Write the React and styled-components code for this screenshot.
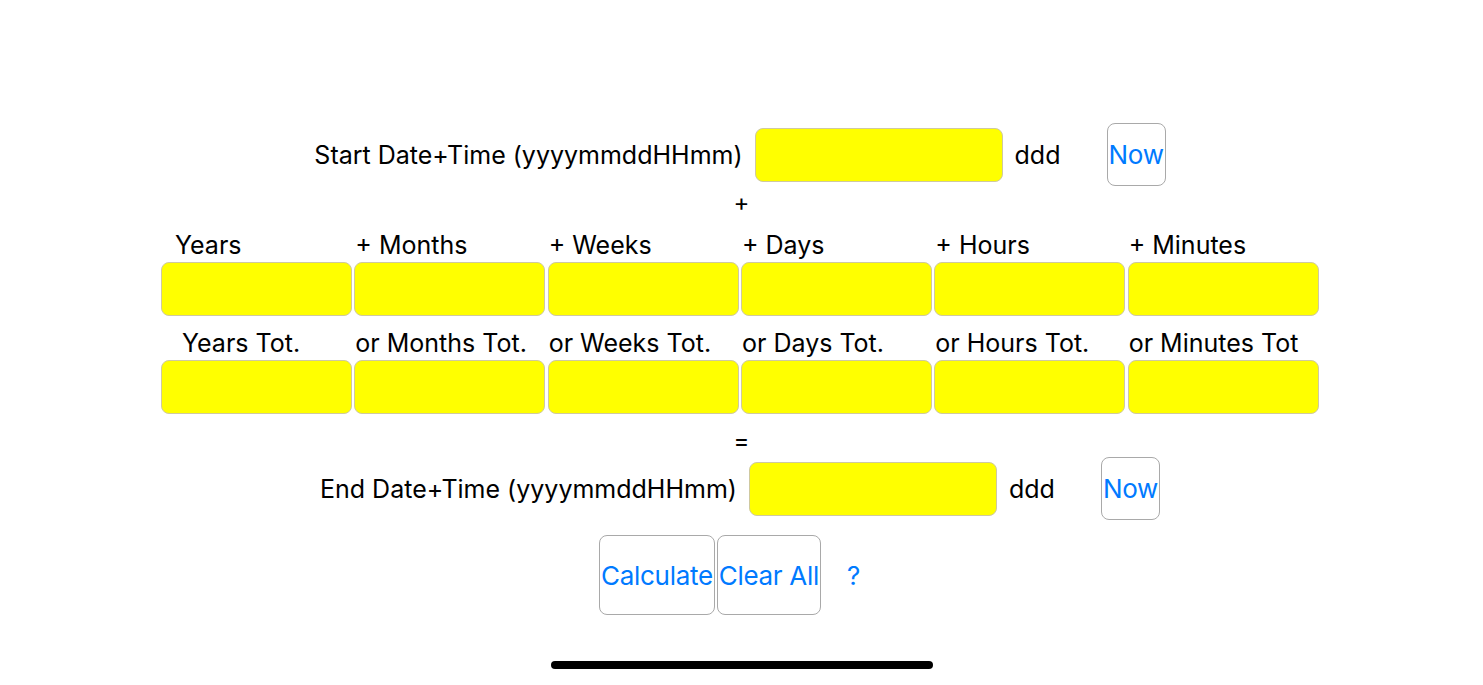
import React from "react";
import styled, { createGlobalStyle } from "styled-components";

const GlobalStyle = createGlobalStyle`
  html, body {
    margin: 0;
    padding: 0;
    background: #ffffff;
  }
  body {
    font-family: Inter, "Liberation Sans", Arial, sans-serif;
    color: #000;
  }
`;

const Page = styled.div`
  height: 685px;
  display: flex;
  flex-direction: column;
  align-items: center;
  padding-top: 123px;
  box-sizing: border-box;
`;

const DateRow = styled.div`
  height: 63px;
  display: flex;
  align-items: center;
  gap: 12px;
  margin-top: ${(p) => p.top || 0}px;
  margin-left: ${(p) => p.shift || 0}px;
`;

const RowLabel = styled.span`
  font-size: 25px;
  white-space: nowrap;
`;

const Field = styled.div`
  width: ${(p) => p.width || 248}px;
  height: 54px;
  background: #ffff00;
  border: 1px solid #cfc9a0;
  border-radius: 8px;
  box-sizing: border-box;
`;

const Ddd = styled.span`
  width: 80px;
  font-size: 25px;
`;

const Button = styled.button`
  height: ${(p) => p.h || 63}px;
  min-width: ${(p) => p.w || 0}px;
  padding: 0 1px;
  background: #fff;
  border: 1px solid ${(p) => (p.bare ? "transparent" : "#a9a9a9")};
  border-radius: 8px;
  color: #007aff;
  font-family: Inter, "Liberation Sans", Arial, sans-serif;
  font-size: 26px;
  letter-spacing: -0.3px;
  cursor: pointer;
`;

const Sign = styled.div`
  height: 30px;
  line-height: 30px;
  font-size: 24px;
  margin-top: ${(p) => p.top || 0}px;
`;

const Grid = styled.div`
  margin-top: 12px;
  margin-left: -3px;
  width: 1158px;
  display: grid;
  grid-template-columns: repeat(6, 1fr);
  column-gap: 2px;
  row-gap: 12px;
`;

const Cell = styled.div`
  display: flex;
  flex-direction: column;
  gap: 2px;
`;

const CellLabel = styled.div`
  height: 30px;
  line-height: 30px;
  font-size: 25px;
  white-space: nowrap;
  padding-left: ${(p) => p.indent || 1}px;
`;

const ActionRow = styled.div`
  margin-top: 15px;
  display: flex;
  gap: 2px;
`;

const HomeBar = styled.div`
  margin-top: auto;
  margin-bottom: 16px;
  width: 382px;
  height: 8px;
  border-radius: 4px;
  background: #000;
`;

const plusLabels = [
  ["Years", 14],
  ["+ Months", 1],
  ["+ Weeks", 1],
  ["+ Days", 0],
  ["+ Hours", 1],
  ["+ Minutes", 0],
];

const totLabels = [
  ["Years Tot.", 21],
  ["or Months Tot.", 1],
  ["or Weeks Tot.", 1],
  ["or Days Tot.", 0],
  ["or Hours Tot.", 1],
  ["or Minutes Tot", 0],
];

const DateLine = ({ label, top }) => (
  <DateRow shift={-3} top={top}>
    <RowLabel>{label}</RowLabel>
    <Field />
    <Ddd>ddd</Ddd>
    <Button>Now</Button>
  </DateRow>
);

const FieldRow = ({ labels }) =>
  labels.map(([text, indent]) => (
    <Cell key={text}>
      <CellLabel indent={indent}>{text}</CellLabel>
      <Field width={191} />
    </Cell>
  ));

export default function App() {
  return (
    <>
      <GlobalStyle />
      <Page>
        <DateLine label="Start Date+Time (yyyymmddHHmm)" />
        <Sign top={2}>+</Sign>
        <Grid>
          <FieldRow labels={plusLabels} />
          <FieldRow labels={totLabels} />
        </Grid>
        <Sign top={12}>=</Sign>
        <DateLine label="End Date+Time (yyyymmddHHmm)" top={1} />
        <ActionRow>
          <Button h={80}>Calculate</Button>
          <Button h={80}>Clear All</Button>
          <Button h={80} w={61} bare>
            ?
          </Button>
        </ActionRow>
        <HomeBar />
      </Page>
    </>
  );
}
